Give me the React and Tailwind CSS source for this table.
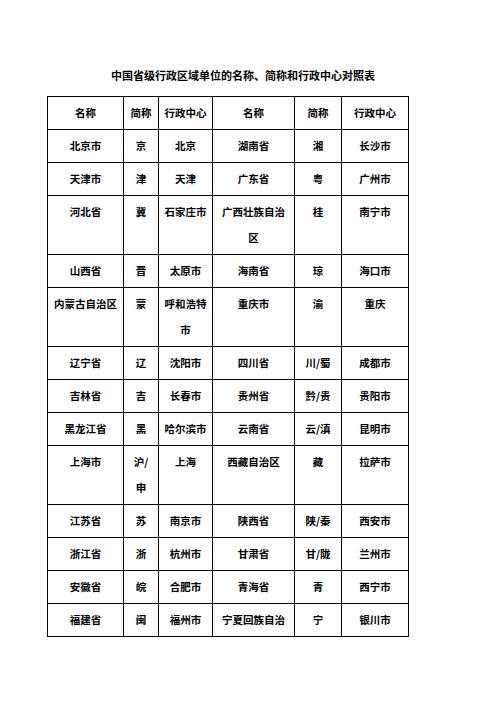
import React from 'react';

const rows = [
    ['北京市', '京', '北京', '湖南省', '湘', '长沙市'],
    ['天津市', '津', '天津', '广东省', '粤', '广州市'],
    ['河北省', '冀', '石家庄市', '广西壮族自治区', '桂', '南宁市'],
    ['山西省', '晋', '太原市', '海南省', '琼', '海口市'],
    ['内蒙古自治区', '蒙', '呼和浩特市', '重庆市', '渝', '重庆'],
    ['辽宁省', '辽', '沈阳市', '四川省', '川/蜀', '成都市'],
    ['吉林省', '吉', '长春市', '贵州省', '黔/贵', '贵阳市'],
    ['黑龙江省', '黑', '哈尔滨市', '云南省', '云/滇', '昆明市'],
    ['上海市', '沪/申', '上海', '西藏自治区', '藏', '拉萨市'],
    ['江苏省', '苏', '南京市', '陕西省', '陕/秦', '西安市'],
    ['浙江省', '浙', '杭州市', '甘肃省', '甘/陇', '兰州市'],
    ['安徽省', '皖', '合肥市', '青海省', '青', '西宁市'],
    ['福建省', '闽', '福州市', '宁夏回族自治', '宁', '银川市'],
];

const header = ['名称', '简称', '行政中心', '名称', '简称', '行政中心'];
const widths = [76, 35, 54, 82, 47, 67];

function Cell({ children }) {
    return (
        <td className="border border-black px-[5px] py-[3px] align-top text-center leading-[26px] break-all">
            {children}
        </td>
    );
}

export default function App() {
    return (
        <div
            className="w-[496px] h-[702px] bg-white text-black font-bold"
            style={{ fontFamily: '"Noto Sans CJK SC", sans-serif' }}
        >
            <div className="pt-[67px] pr-[10px] text-center text-[11px] leading-[16px]">
                中国省级行政区域单位的名称、简称和行政中心对照表
            </div>

            <table className="mt-[13px] ml-[47px] w-[362px] table-fixed border-collapse text-[10.5px]">
                <colgroup>
                    {widths.map((w, i) => (
                        <col key={i} style={{ width: w }} />
                    ))}
                </colgroup>
                <tbody>
                    <tr>
                        {header.map((h, i) => (
                            <Cell key={i}>{h}</Cell>
                        ))}
                    </tr>
                    {rows.map((row, r) => (
                        <tr key={r}>
                            {row.map((c, i) => (
                                <Cell key={i}>{c}</Cell>
                            ))}
                        </tr>
                    ))}
                </tbody>
            </table>
        </div>
    );
}
